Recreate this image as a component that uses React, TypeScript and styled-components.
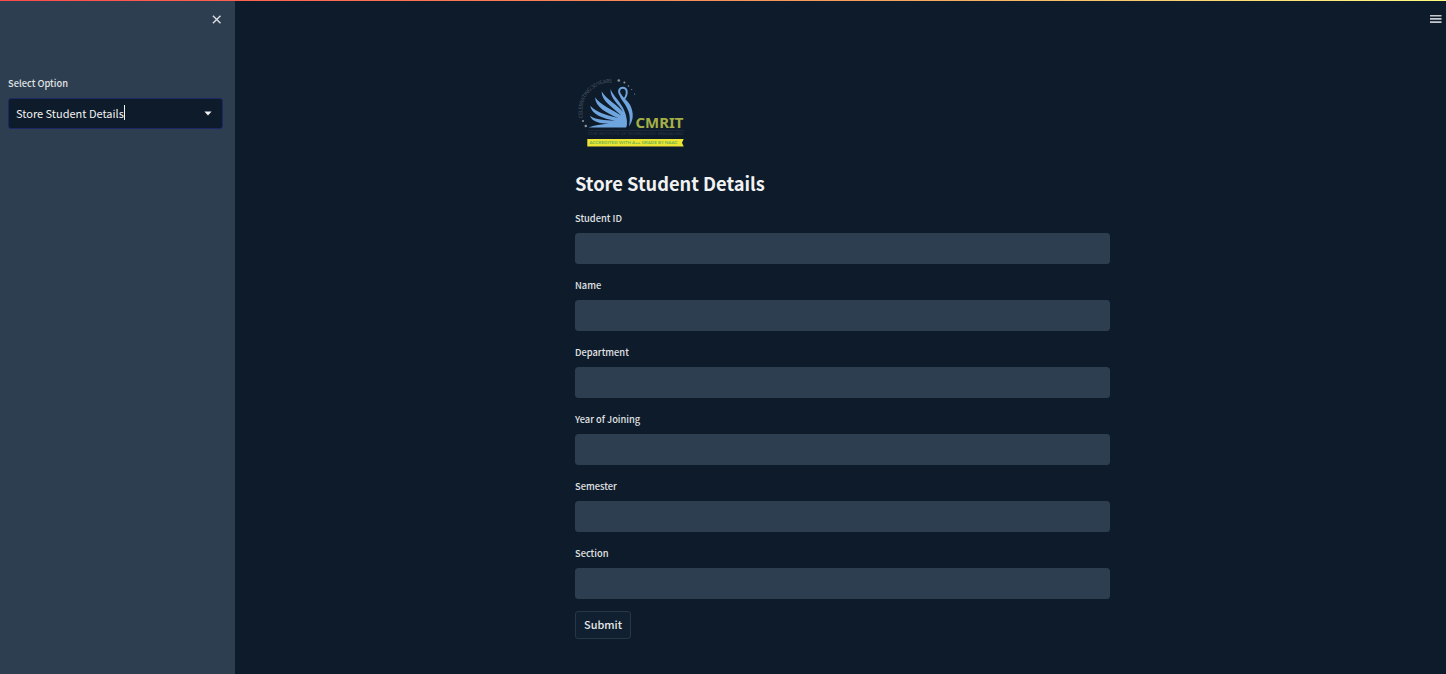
import React from "react";
import styled, { createGlobalStyle } from "styled-components";

const GlobalStyle = createGlobalStyle`
  * { box-sizing: border-box; }
  body {
    margin: 0;
    background: #0e1b2a;
    color: #f1f2f3;
    font-family: "Noto Sans CJK SC", "Noto Sans", sans-serif;
  }
`;

const Page = styled.div`
  height: 674px;
  display: grid;
  grid-template-rows: 1px 1fr;
  overflow: hidden;
`;

const Decoration = styled.div`
  background: linear-gradient(90deg, #ff4b4b, #f5a05c 60%, #fffd80);
`;

const Body = styled.div`
  display: grid;
  grid-template-columns: 235px 1fr;
  min-height: 0;
`;

const Sidebar = styled.aside`
  background: #2d3e50;
  padding: 13px 12px 0 8px;
`;

const SidebarHeader = styled.div`
  display: flex;
  justify-content: flex-end;
  height: 61px;
  padding-right: 1px;
`;

const IconButton = styled.button`
  display: block;
  width: 11px;
  height: 11px;
  padding: 0;
  border: 0;
  background: none;
  color: #d9dde0;
  svg { display: block; }
`;

const Label = styled.label`
  display: block;
  height: 16px;
  line-height: 16px;
  font-size: 9.3px;
  font-weight: 500;
  color: #e0e3e5;
  white-space: nowrap;
`;

const Select = styled.div`
  display: flex;
  align-items: center;
  height: 31px;
  margin-top: 7px;
  padding: 0 10px 2px 7px;
  border: 1px solid #1c2866;
  border-radius: 3px;
  background: #0e1b2a;
  font-size: 11px;
  line-height: 20px;
  white-space: nowrap;
`;

const Caret = styled.span`
  width: 1px;
  height: 15px;
  background: #f1f2f3;
`;

const Arrow = styled.svg`
  margin: 2px 0 0 auto;
`;

const Main = styled.main`
  display: grid;
  grid-template-columns: 1fr 535px 1fr;
`;

const Toolbar = styled.div`
  grid-column: 3;
  grid-row: 1;
  display: flex;
  justify-content: flex-end;
  padding: 13px 5px 0 0;
`;

const Content = styled.section`
  grid-column: 2;
  grid-row: 1;
  padding: 69px 0 0 2px;
`;

const Logo = styled.svg`
  display: block;
  margin-left: -5px;
`;

const Title = styled.h2`
  margin: 13px 0 0;
  height: 30px;
  line-height: 30px;
  font-size: 18.25px;
  font-weight: 700;
  white-space: nowrap;
`;

const Form = styled.form`
  padding-top: 11.6px;
`;

const Field = styled.div`
  height: 67.15px;
`;

const Input = styled.input`
  display: block;
  width: 534.5px;
  height: 31px;
  margin-top: 7.2px;
  border: 0;
  border-radius: 3.5px;
  background: #2d3e50;
  color: inherit;
  font: inherit;
`;

const Submit = styled.button`
  display: block;
  width: 56px;
  height: 28px;
  margin-top: -1.5px;
  padding: 0 0 2px;
  border: 1px solid #273746;
  border-radius: 3px;
  background: #102030;
  color: #e6e8ea;
  font: 500 10.9px/24px "Noto Sans CJK SC", "Noto Sans", sans-serif;
`;

const fields = ["Student ID", "Name", "Department", "Year of Joining", "Semester", "Section"];

function CollegeLogo() {
  return (
    <Logo width="125" height="85" viewBox="0 0 125 85" role="img" aria-label="CMRIT">
      <defs>
        <path id="arc" d="M13 48C9 31 21 10 46 13" />
      </defs>
      <text fill="#465361" fontSize="5.4" fontFamily="Lato, sans-serif">
        <textPath href="#arc" textLength="53">CELEBRATING 30 YEARS</textPath>
      </text>
      <g fill="#8a939b">
        <circle cx="48.8" cy="10.5" r="1.3" />
        <circle cx="54.4" cy="12.6" r="1" />
        <circle cx="58.5" cy="16" r=".8" />
        <circle cx="61.7" cy="19.5" r=".6" />
        <circle cx="64.6" cy="24" r=".6" />
        <circle cx="13" cy="51" r="1.1" />
        <circle cx="15.8" cy="56" r="1.3" />
      </g>
      <g fill="#6ea5de">
        <path d="M40.6 18.8C42.6 26.5 55.5 35 56.8 50C57.2 54 57 56 56 57.5H18.5C24 55.4 31 54.6 39 53.6C29 53.6 22 51.5 20 45.7C26 50 34 50 45 50.8C33 48.6 21.5 44.5 20.2 35.8C27 43 37 45 48.5 48.2C36 42.8 25.5 37 25 27.2C31 35.5 42 39.5 51.5 45.5C42 36.8 31.5 31 31.6 21.2C36.5 29.5 47 34.5 53 42C49 34 39.5 28.5 40.6 18.8Z" />
        <path d="M49.4 24C49.8 28.5 54 32 56.2 36.5C60 43 60.5 48 59 56.4C63.7 50 63.8 43 60.4 35.5C58 30.5 53 28 51.2 24Z" />
      </g>
      <path d="M50.2 25C47.4 19.5 50.5 17.6 53 17.7C56.8 17.9 57.7 22.5 56 26C55.2 28 54.2 29.2 53 30.5" fill="none" stroke="#6ea5de" strokeWidth="1.9" />
      <text x="65.5" y="58.2" textLength="48" lengthAdjust="spacingAndGlyphs" fill="#a4b047" fontSize="15" fontWeight="700" fontFamily="Noto Sans, sans-serif">CMRIT</text>
      <path d="M18 60.4H114" stroke="#263440" strokeWidth=".7" />
      <text x="18" y="65.3" textLength="95" lengthAdjust="spacingAndGlyphs" fill="#293846" fontSize="4" fontFamily="Lato, sans-serif">CMR INSTITUTE OF TECHNOLOGY, BENGALURU</text>
      <path d="M17.3 69H113.7L112 72.8L113.7 76.6H17.3Z" fill="#ece432" />
      <text x="19.5" y="74.4" textLength="88" lengthAdjust="spacingAndGlyphs" fill="#6fb552" fontSize="4.4" fontWeight="700" fontFamily="Lato, sans-serif">ACCREDITED WITH A++ GRADE BY NAAC</text>
    </Logo>
  );
}

export default function App() {
  return (
    <>
      <GlobalStyle />
      <Page>
        <Decoration />
        <Body>
          <Sidebar>
            <SidebarHeader>
              <IconButton aria-label="Close sidebar">
                <svg width="11" height="11" viewBox="0 0 11 11">
                  <path d="M1.9 1.7L9.5 9.3M9.5 1.7L1.9 9.3" stroke="currentColor" strokeWidth="1.4" />
                </svg>
              </IconButton>
            </SidebarHeader>
            <Label>Select Option</Label>
            <Select>
              Store Student Details
              <Caret />
              <Arrow width="8" height="5" viewBox="0 0 8 5">
                <path d="M.4.5H7.6L4 4.4Z" fill="#f1f2f3" />
              </Arrow>
            </Select>
          </Sidebar>
          <Main>
            <Toolbar>
              <IconButton aria-label="Menu">
                <svg width="12" height="11" viewBox="0 0 12 11">
                  <path d="M0 1.8H11.5M0 4.9H11.5M0 8.1H11.5" stroke="#c6cace" strokeWidth="1.6" />
                </svg>
              </IconButton>
            </Toolbar>
            <Content>
              <CollegeLogo />
              <Title>Store Student Details</Title>
              <Form>
                {fields.map((name) => (
                  <Field key={name}>
                    <Label htmlFor={name}>{name}</Label>
                    <Input id={name} />
                  </Field>
                ))}
                <Submit type="button">Submit</Submit>
              </Form>
            </Content>
          </Main>
        </Body>
      </Page>
    </>
  );
}
